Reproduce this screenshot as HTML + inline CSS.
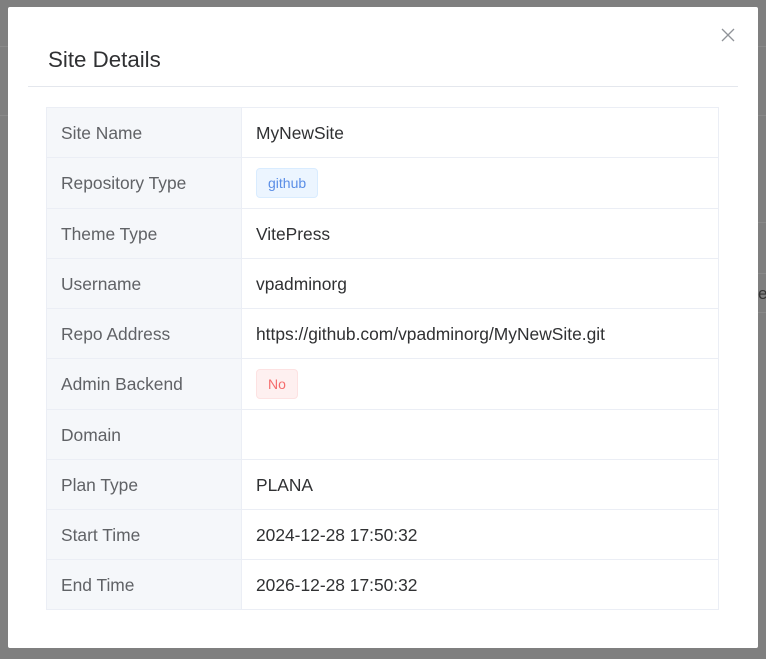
<!DOCTYPE html>
<html><head><style>
html,body{margin:0;padding:0;width:766px;height:659px;overflow:hidden;background:#7f7f7f;font-family:"Liberation Sans",sans-serif;}
.bgl{position:absolute;height:1px;background:#8a8a8a;}
.dlg{position:absolute;left:8px;top:7px;width:750px;height:641px;background:#fff;border-radius:2px;}
.title{position:absolute;left:40px;top:40px;font-size:22.3px;color:#303133;}
.close{position:absolute;left:713px;top:21px;}
.hr{position:absolute;left:20px;top:79px;width:710px;height:1px;background:#e4e7ed;}
table{position:absolute;left:38px;top:100px;width:673px;border-collapse:collapse;font-size:17.4px;line-height:20px;}
td{border:1px solid #ebeef5;padding:0 14px;height:49px;color:#303133;}
td.l{width:166px;background:#f5f7fa;color:#606266;}
.tag{display:inline-block;height:28px;line-height:28px;padding:0 11px;border-radius:4px;font-size:14px;}
.b{background:#ecf5ff;border:1px solid #d9ecff;color:#5b8ee6;}
.r{background:#fef0f0;border:1px solid #fde2e2;color:#f56c6c;}
</style></head><body>
<div class="bgl" style="left:0;top:46px;width:8px"></div>
<div class="bgl" style="left:0;top:115px;width:8px"></div>
<div class="bgl" style="left:758px;top:46px;width:8px"></div>
<div class="bgl" style="left:758px;top:115px;width:8px"></div>
<div class="bgl" style="left:758px;top:222px;width:8px"></div>
<div class="bgl" style="left:758px;top:273px;width:8px"></div>
<div class="bgl" style="left:758px;top:312px;width:8px"></div>
<div style="position:absolute;left:758px;top:284px;font-size:17px;color:#333">e</div>
<div class="dlg">
<div class="title">Site Details</div>
<svg class="close" width="14" height="14" viewBox="0 0 14 14"><path d="M1 1L13 13M13 1L1 13" stroke="#909399" stroke-width="1.3"/></svg>
<div class="hr"></div>
<table>
<tr><td class="l">Site Name</td><td>MyNewSite</td></tr>
<tr><td class="l" style="height:50px">Repository Type</td><td><span class="tag b">github</span></td></tr>
<tr><td class="l">Theme Type</td><td>VitePress</td></tr>
<tr><td class="l">Username</td><td>vpadminorg</td></tr>
<tr><td class="l">Repo Address</td><td>https://github.com/vpadminorg/MyNewSite.git</td></tr>
<tr><td class="l" style="height:50px">Admin Backend</td><td><span class="tag r">No</span></td></tr>
<tr><td class="l">Domain</td><td></td></tr>
<tr><td class="l" style="height:48px">Plan Type</td><td>PLANA</td></tr>
<tr><td class="l">Start Time</td><td>2024-12-28 17:50:32</td></tr>
<tr><td class="l">End Time</td><td>2026-12-28 17:50:32</td></tr>
</table>
</div>
</body></html>
